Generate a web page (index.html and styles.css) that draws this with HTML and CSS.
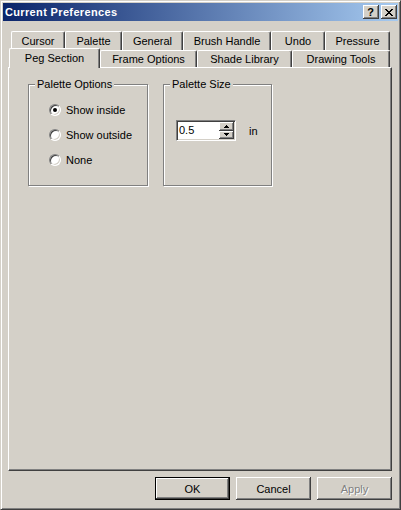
FILE: index.html
```html
<!DOCTYPE html>
<html>
<head>
<meta charset="utf-8">
<title>Current Preferences</title>
<link rel="stylesheet" href="styles.css">
</head>
<body>
<div class="window">
  <div class="titlebar">
    <span class="title">Current Preferences</span>
    <div class="caption-btns">
      <span class="cbtn help">?</span>
      <span class="cbtn close">
        <svg width="8" height="7" viewBox="0 0 8 7" shape-rendering="crispEdges"><path fill="#000" d="M0 0h2v1H0zM6 0h2v1H6zM1 1h2v1H1zM5 1h2v1H5zM2 2h4v1H2zM3 3h2v1H3zM2 4h4v1H2zM1 5h2v1H1zM5 5h2v1H5zM0 6h2v1H0zM6 6h2v1H6z"/></svg>
      </span>
    </div>
  </div>
  <div class="client">
    <div class="tabs">
      <div class="tabrow back">
        <div class="tab w-cursor">Cursor</div>
        <div class="tab w-palette">Palette</div>
        <div class="tab w-general">General</div>
        <div class="tab w-brush">Brush Handle</div>
        <div class="tab w-undo">Undo</div>
        <div class="tab w-pressure">Pressure</div>
      </div>
      <div class="tabrow front">
        <div class="tab sel w-peg">Peg Section</div>
        <div class="tab w-frame">Frame Options</div>
        <div class="tab w-shade">Shade Library</div>
        <div class="tab w-drawing">Drawing Tools</div>
      </div>
      <div class="panel">
        <div class="group g-options">
          <div class="gtitle">Palette Options</div>
          <ul class="radios">
            <li class="radio-row"><span class="radio checked"></span><span>Show inside</span></li>
            <li class="radio-row"><span class="radio"></span><span>Show outside</span></li>
            <li class="radio-row"><span class="radio"></span><span>None</span></li>
          </ul>
        </div>
        <div class="group g-size">
          <div class="gtitle">Palette Size</div>
          <div class="spin-row">
            <div class="spin">
              <span class="spin-value">0.5</span>
              <span class="spin-btns">
                <span class="sb"><svg width="5" height="3" viewBox="0 0 5 3" shape-rendering="crispEdges"><path fill="#000" d="M2 0h1v1H2zM1 1h3v1H1zM0 2h5v1H0z"/></svg></span>
                <span class="sb"><svg width="5" height="3" viewBox="0 0 5 3" shape-rendering="crispEdges"><path fill="#000" d="M0 0h5v1H0zM1 1h3v1H1zM2 2h1v1H2z"/></svg></span>
              </span>
            </div>
            <span class="unit">in</span>
          </div>
        </div>
      </div>
    </div>
    <div class="buttons">
      <div class="btn default">OK</div>
      <div class="btn">Cancel</div>
      <div class="btn disabled">Apply</div>
    </div>
  </div>
</div>
</body>
</html>
```
FILE: styles.css
```css
html, body {
  margin: 0;
  padding: 0;
}
body {
  background: #D4D0C8;
  font-family: "Liberation Sans", Arial, sans-serif;
  font-size: 11px;
  color: #000;
}
.window {
  width: 401px;
  height: 510px;
  box-sizing: border-box;
  border: 1px solid;
  border-color: #D4D0C8 #404040 #404040 #D4D0C8;
  box-shadow: inset 1px 1px #fff, inset -1px -1px #808080;
  padding: 2px;
  background: #D4D0C8;
  display: flex;
  flex-direction: column;
}
.titlebar {
  height: 18px;
  box-sizing: border-box;
  display: flex;
  align-items: center;
  justify-content: space-between;
  padding: 0 1px 0 2px;
  background: linear-gradient(to right, #0A246A, #A6CAF0);
}
.title {
  color: #fff;
  font-weight: bold;
  font-size: 11px;
  letter-spacing: 0.35px;
}
.caption-btns {
  display: flex;
  gap: 2px;
}
.cbtn {
  width: 16px;
  height: 14px;
  box-sizing: border-box;
  background: #D4D0C8;
  box-shadow: inset -1px -1px #404040, inset 1px 1px #fff, inset -2px -2px #808080;
  display: flex;
  align-items: center;
  justify-content: center;
}
.help {
  font-weight: bold;
  font-size: 11px;
  line-height: 12px;
  padding-right: 1px;
}
.close svg {
  display: block;
  margin-right: 1px;
}
.client {
  flex: 1;
  display: flex;
  flex-direction: column;
}
.tabs {
  margin: 10px 0 0 5px;
  width: 384px;
}
.tabrow {
  display: flex;
  padding-left: 3px;
}
.back {
  height: 19px;
}
.front {
  height: 17px;
  align-items: flex-start;
}
.tab {
  box-sizing: border-box;
  height: 100%;
  border-top: 1px solid #fff;
  border-left: 1px solid #fff;
  border-right: 1px solid #404040;
  border-radius: 2px 2px 0 0;
  box-shadow: inset -1px 0 #808080;
  background: #D4D0C8;
  display: flex;
  align-items: center;
  justify-content: center;
  white-space: nowrap;
}
.w-cursor { width: 54px; }
.w-palette { width: 57px; }
.w-general { width: 61px; }
.w-brush { width: 88px; }
.w-undo { width: 54px; }
.w-pressure { width: 65px; }
.w-peg { width: 89px; }
.w-frame { width: 97px; }
.w-shade { width: 95px; }
.w-drawing { width: 98px; }
.tab.sel {
  width: 91px;
  height: 20px;
  margin-top: -2px;
  margin-left: -2px;
  padding-bottom: 2px;
  position: relative;
  z-index: 1;
}
.panel {
  height: 404px;
  box-sizing: border-box;
  border-top: 1px solid #fff;
  border-left: 1px solid #fff;
  border-right: 1px solid #404040;
  border-bottom: 1px solid #404040;
  box-shadow: inset -1px -1px #808080;
  display: flex;
  align-items: flex-start;
  gap: 15px;
  padding: 16px 0 0 19px;
}
.group {
  box-sizing: border-box;
  height: 102px;
  border: 1px solid #808080;
  box-shadow: inset 1px 1px #fff, 1px 1px #fff;
}
.g-options { width: 120px; }
.g-size { width: 109px; }
.gtitle {
  width: fit-content;
  margin: -7px 0 0 6px;
  padding: 0 2px;
  line-height: 13px;
  background: #D4D0C8;
}
.radios {
  list-style: none;
  margin: 6px 0 0 0;
  padding: 0 0 0 20px;
}
.radio-row {
  height: 25px;
  display: flex;
  align-items: center;
  gap: 5px;
}
.radio {
  width: 12px;
  height: 12px;
  box-sizing: border-box;
  border-radius: 50%;
  border: 1px solid;
  border-color: #808080 #fff #fff #808080;
  box-shadow: inset 1px 1px #404040, inset -1px -1px #D4D0C8;
  background: #fff;
  display: flex;
  align-items: center;
  justify-content: center;
  flex: none;
}
.radio.checked::after {
  content: "";
  width: 4px;
  height: 4px;
  border-radius: 50%;
  background: #000;
}
.spin-row {
  display: flex;
  align-items: center;
  margin: 29px 0 0 12px;
}
.spin {
  width: 60px;
  height: 21px;
  box-sizing: border-box;
  border: 1px solid;
  border-color: #808080 #fff #fff #808080;
  box-shadow: inset 1px 1px #404040, inset -1px -1px #D4D0C8;
  padding: 1px;
  background: #fff;
  display: flex;
}
.spin-value {
  flex: 1;
  padding-left: 1px;
  line-height: 17px;
  background: #fff;
}
.spin-btns {
  width: 15px;
  display: flex;
  flex-direction: column;
}
.sb {
  flex: 1;
  background: #D4D0C8;
  box-shadow: inset -1px -1px #404040, inset 1px 1px #fff, inset -2px -2px #808080;
  display: flex;
  align-items: center;
  justify-content: center;
}
.sb svg {
  display: block;
  margin-right: 1px;
}
.unit {
  margin-left: 13px;
}
.buttons {
  display: flex;
  justify-content: flex-end;
  gap: 6px;
  margin-top: 6px;
  padding-right: 6px;
}
.btn {
  width: 75px;
  height: 23px;
  box-sizing: border-box;
  background: #D4D0C8;
  box-shadow: inset -1px -1px #404040, inset 1px 1px #fff, inset -2px -2px #808080;
  display: flex;
  align-items: center;
  justify-content: center;
}
.btn.default {
  border: 1px solid #000;
  box-shadow: inset -1px -1px #404040, inset 1px 1px #fff, inset -2px -2px #808080;
}
.btn.disabled {
  color: #808080;
  text-shadow: 1px 1px #fff;
}
```
